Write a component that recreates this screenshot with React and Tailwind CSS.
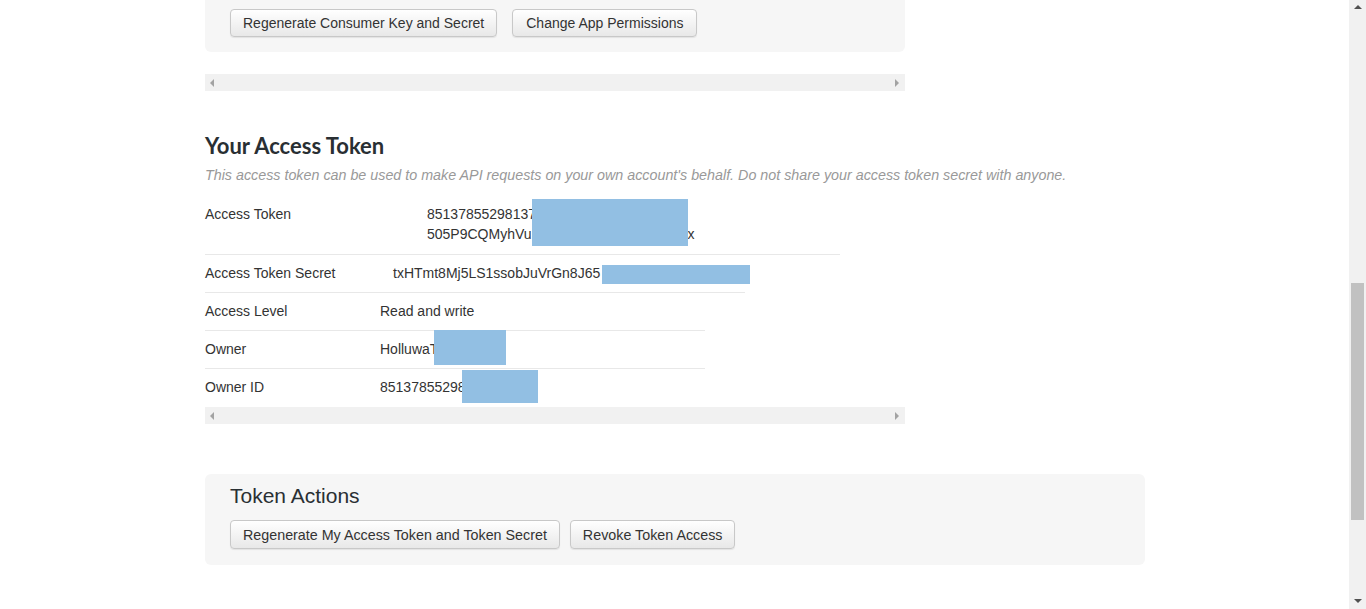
import React from 'react';

const btn =
  "inline-flex items-center px-3 rounded border border-[#c8c8c8] bg-gradient-to-b from-white to-[#e8e8e8] text-[#333] leading-[20px] shadow-[0_1px_1px_rgba(0,0,0,0.08)]";

// fausse barre de défilement horizontale
const HScroll = ({ className = '' }) => (
  <div className={`h-[17px] w-[700px] bg-[#f1f1f1] flex items-center justify-between px-[5px] ${className}`}>
    <svg width="5" height="8" viewBox="0 0 5 8"><path d="M4 0 L0 4 L4 8 Z" fill="#a3a3a3" /></svg>
    <svg width="5" height="8" viewBox="0 0 5 8"><path d="M0 0 L4 4 L0 8 Z" fill="#a3a3a3" /></svg>
  </div>
);

const Redact = ({ className }) => <div className={`absolute bg-[#92bfe3] z-10 ${className}`} />;

const App = () => {
  return (
    <div className="flex h-[609px] w-[1366px] overflow-hidden bg-white" style={{ fontFamily: '"Liberation Sans", Arial, sans-serif' }}>
      <div className="flex-1 pl-[205px]">
        {/* panneau du haut */}
        <div className="w-[700px] bg-[#f6f6f6] rounded-b-md pt-[9px] pb-[15px] px-[25px] flex gap-[15px]">
          <button className={`${btn} h-[28px] text-[14px]`}>Regenerate Consumer Key and Secret</button>
          <button className={`${btn} h-[28px] text-[14px] px-[13px]`}>Change App Permissions</button>
        </div>

        <HScroll className="mt-[22px]" />

        <h2 className="mt-[42px] text-[22px] leading-[26px] font-bold text-[#292f33]" style={{ fontFamily: 'Lato, "Liberation Sans", sans-serif' }}>
          Your Access Token
        </h2>
        <p className="mt-[6px] text-[14.3px] leading-[20px] italic text-[#999]">
          This access token can be used to make API requests on your own account's behalf. Do not share your access token secret with anyone.
        </p>

        {/* tableau des jetons */}
        <div className="mt-[11px] text-[14px] leading-[20px] text-[#333]">
          <div className="relative w-[635px] flex border-b border-[#e8e8e8] pt-[8px] pb-[10px]">
            <div className="w-[222px]">Access Token</div>
            <div>
              <div>85137855298137</div>
              <div>505P9CQMyhVu<span className="inline-block w-[156px]" />x</div>
            </div>
            <Redact className="left-[327px] top-[3px] w-[156px] h-[47px]" />
          </div>
          <div className="relative w-[540px] flex border-b border-[#e8e8e8] py-[8px] h-[38px]">
            <div className="w-[188px]">Access Token Secret</div>
            <div>txHTmt8Mj5LS1ssobJuVrGn8J65</div>
            <Redact className="left-[397px] top-[10px] w-[148px] h-[19px]" />
          </div>
          <div className="relative w-[500px] flex border-b border-[#e8e8e8] py-[8px] h-[38px]">
            <div className="w-[175px]">Access Level</div>
            <div>Read and write</div>
          </div>
          <div className="relative w-[500px] flex border-b border-[#e8e8e8] py-[8px] h-[38px]">
            <div className="w-[175px]">Owner</div>
            <div>HolluwaT</div>
            <Redact className="left-[229px] top-[-1px] w-[72px] h-[35px]" />
          </div>
          <div className="relative w-[500px] flex py-[8px] h-[38px]">
            <div className="w-[175px]">Owner ID</div>
            <div>85137855298</div>
            <Redact className="left-[257px] top-[1px] w-[76px] h-[33px]" />
          </div>
        </div>

        <HScroll />

        {/* actions sur le jeton */}
        <div className="mt-[50px] w-[940px] bg-[#f6f6f6] rounded-md pt-[10px] pb-[16px] px-[25px]">
          <h3 className="text-[21px] leading-[24px] text-[#292f33]">Token Actions</h3>
          <div className="mt-[12px] flex gap-[10px]">
            <button className={`${btn} h-[29px] text-[14.3px]`}>Regenerate My Access Token and Token Secret</button>
            <button className={`${btn} h-[29px] text-[14.3px]`}>Revoke Token Access</button>
          </div>
        </div>
      </div>

      {/* barre de défilement verticale */}
      <div className="w-[17px] h-full bg-[#f1f1f1] flex flex-col items-center py-[5px]">
        <svg width="8" height="5" viewBox="0 0 8 5"><path d="M0 4 L4 0 L8 4 Z" fill="#505050" /></svg>
        <div className="mt-[273px] w-[13px] h-[237px] bg-[#c1c1c1]" />
        <div className="flex-1" />
        <svg width="8" height="5" viewBox="0 0 8 5"><path d="M0 0 L4 4 L8 0 Z" fill="#505050" /></svg>
      </div>
    </div>
  );
};

export default App;
